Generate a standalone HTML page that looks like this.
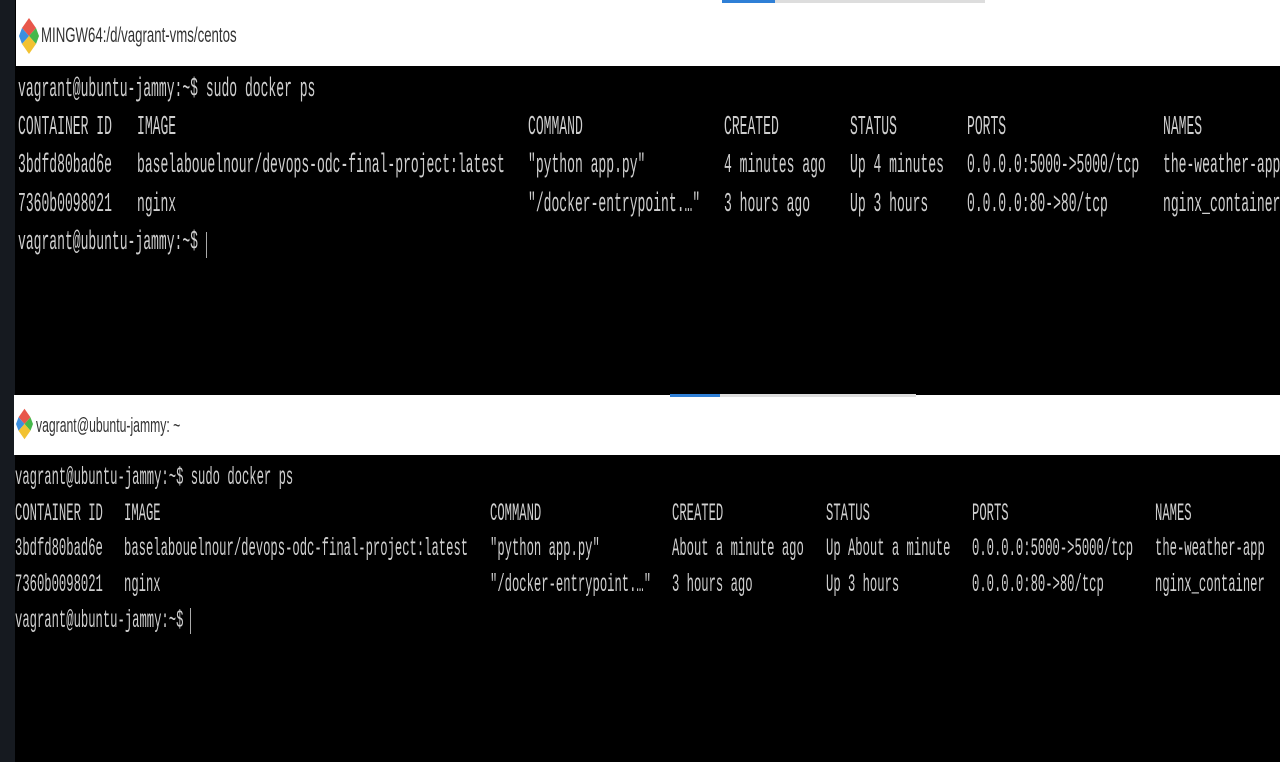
<!DOCTYPE html><html><head><style>
body{margin:0;width:1280px;height:762px;background:#000;position:relative;overflow:hidden;font-family:"Liberation Mono",monospace;}
.strip{position:absolute;left:0;top:0;width:15px;height:762px;background:#161a20}
.bar{position:absolute;background:#fff;right:0}
.t{position:absolute;white-space:pre;color:#cfcfcf;transform-origin:0 50%;line-height:1}
.a .t{font-size:27px;transform:scaleX(0.483)}
.b .t{font-size:25px;transform:scaleX(0.488)}
.title{position:absolute;white-space:pre;color:#333;font-family:"Liberation Sans",sans-serif;transform-origin:0 50%;transform:scaleX(0.63);font-size:21px}
.cur{position:absolute;width:1px;background:#aaa}
</style></head><body>
<div class="strip"></div>
<div class="bar" style="left:16px;top:0;height:66px"></div>
<div style="position:absolute;left:767px;top:0;width:218px;height:3px;background:#ddd"></div>
<div style="position:absolute;left:722px;top:0;width:53px;height:3px;background:#2f7fd6"></div>
<svg style="position:absolute;left:19px;top:18px" width="20" height="36" viewBox="0 0 20 36"><polygon points="10,0 17,10 10,18 3,10" fill="#e8574b"/><polygon points="3,10 10,18 3,26 0,18" fill="#3b8fe0"/><polygon points="17,10 20,18 17,26 10,18" fill="#45b84a"/><polygon points="10,18 17,26 10,36 3,26" fill="#f2c232"/></svg>
<div class="title" style="left:41px;top:24px">MINGW64:/d/vagrant-vms/centos</div>

<div class="a">
<div class="t" style="left:18px;top:77px">vagrant@ubuntu-jammy:~$ sudo docker ps</div>
<div class="t" style="left:18px;top:115px">CONTAINER ID</div><div class="t" style="left:137px;top:115px">IMAGE</div><div class="t" style="left:528px;top:115px">COMMAND</div><div class="t" style="left:724px;top:115px">CREATED</div><div class="t" style="left:850px;top:115px">STATUS</div><div class="t" style="left:967px;top:115px">PORTS</div><div class="t" style="left:1163px;top:115px">NAMES</div>
<div class="t" style="left:18px;top:153px">3bdfd80bad6e</div><div class="t" style="left:137px;top:153px">baselabouelnour/devops-odc-final-project:latest</div><div class="t" style="left:528px;top:153px">"python app.py"</div><div class="t" style="left:724px;top:153px">4 minutes ago</div><div class="t" style="left:850px;top:153px">Up 4 minutes</div><div class="t" style="left:967px;top:153px">0.0.0.0:5000-&gt;5000/tcp</div><div class="t" style="left:1163px;top:153px">the-weather-app</div>
<div class="t" style="left:18px;top:192px">7360b0098021</div><div class="t" style="left:137px;top:192px">nginx</div><div class="t" style="left:528px;top:192px">"/docker-entrypoint.…"</div><div class="t" style="left:724px;top:192px">3 hours ago</div><div class="t" style="left:850px;top:192px">Up 3 hours</div><div class="t" style="left:967px;top:192px">0.0.0.0:80-&gt;80/tcp</div><div class="t" style="left:1163px;top:192px">nginx_container</div>
<div class="t" style="left:18px;top:230px">vagrant@ubuntu-jammy:~$</div>
</div>
<div class="cur" style="left:206px;top:232px;height:26px"></div>

<div class="bar" style="left:14px;top:395px;height:60px"></div>
<div style="position:absolute;left:720px;top:394px;width:196px;height:3px;background:#ddd"></div>
<div style="position:absolute;left:670px;top:394px;width:50px;height:3px;background:#2f7fd6"></div>
<svg style="position:absolute;left:16px;top:405px" width="17" height="38" viewBox="0 0 20 36"><polygon points="10,0 17,10 10,18 3,10" fill="#e8574b"/><polygon points="3,10 10,18 3,26 0,18" fill="#3b8fe0"/><polygon points="17,10 20,18 17,26 10,18" fill="#45b84a"/><polygon points="10,18 17,26 10,36 3,26" fill="#f2c232"/></svg>
<div class="title" style="left:36px;top:415px;font-size:20px;transform:scaleX(0.61)">vagrant@ubuntu-jammy: ~</div>

<div class="b">
<div class="t" style="left:15px;top:465px">vagrant@ubuntu-jammy:~$ sudo docker ps</div>
<div class="t" style="left:15px;top:501px">CONTAINER ID</div><div class="t" style="left:124px;top:501px">IMAGE</div><div class="t" style="left:490px;top:501px">COMMAND</div><div class="t" style="left:672px;top:501px">CREATED</div><div class="t" style="left:826px;top:501px">STATUS</div><div class="t" style="left:972px;top:501px">PORTS</div><div class="t" style="left:1155px;top:501px">NAMES</div>
<div class="t" style="left:15px;top:536px">3bdfd80bad6e</div><div class="t" style="left:124px;top:536px">baselabouelnour/devops-odc-final-project:latest</div><div class="t" style="left:490px;top:536px">"python app.py"</div><div class="t" style="left:672px;top:536px">About a minute ago</div><div class="t" style="left:826px;top:536px">Up About a minute</div><div class="t" style="left:972px;top:536px">0.0.0.0:5000-&gt;5000/tcp</div><div class="t" style="left:1155px;top:536px">the-weather-app</div>
<div class="t" style="left:15px;top:572px">7360b0098021</div><div class="t" style="left:124px;top:572px">nginx</div><div class="t" style="left:490px;top:572px">"/docker-entrypoint.…"</div><div class="t" style="left:672px;top:572px">3 hours ago</div><div class="t" style="left:826px;top:572px">Up 3 hours</div><div class="t" style="left:972px;top:572px">0.0.0.0:80-&gt;80/tcp</div><div class="t" style="left:1155px;top:572px">nginx_container</div>
<div class="t" style="left:15px;top:608px">vagrant@ubuntu-jammy:~$</div>
</div>
<div class="cur" style="left:190px;top:608px;height:26px"></div>
</body></html>
